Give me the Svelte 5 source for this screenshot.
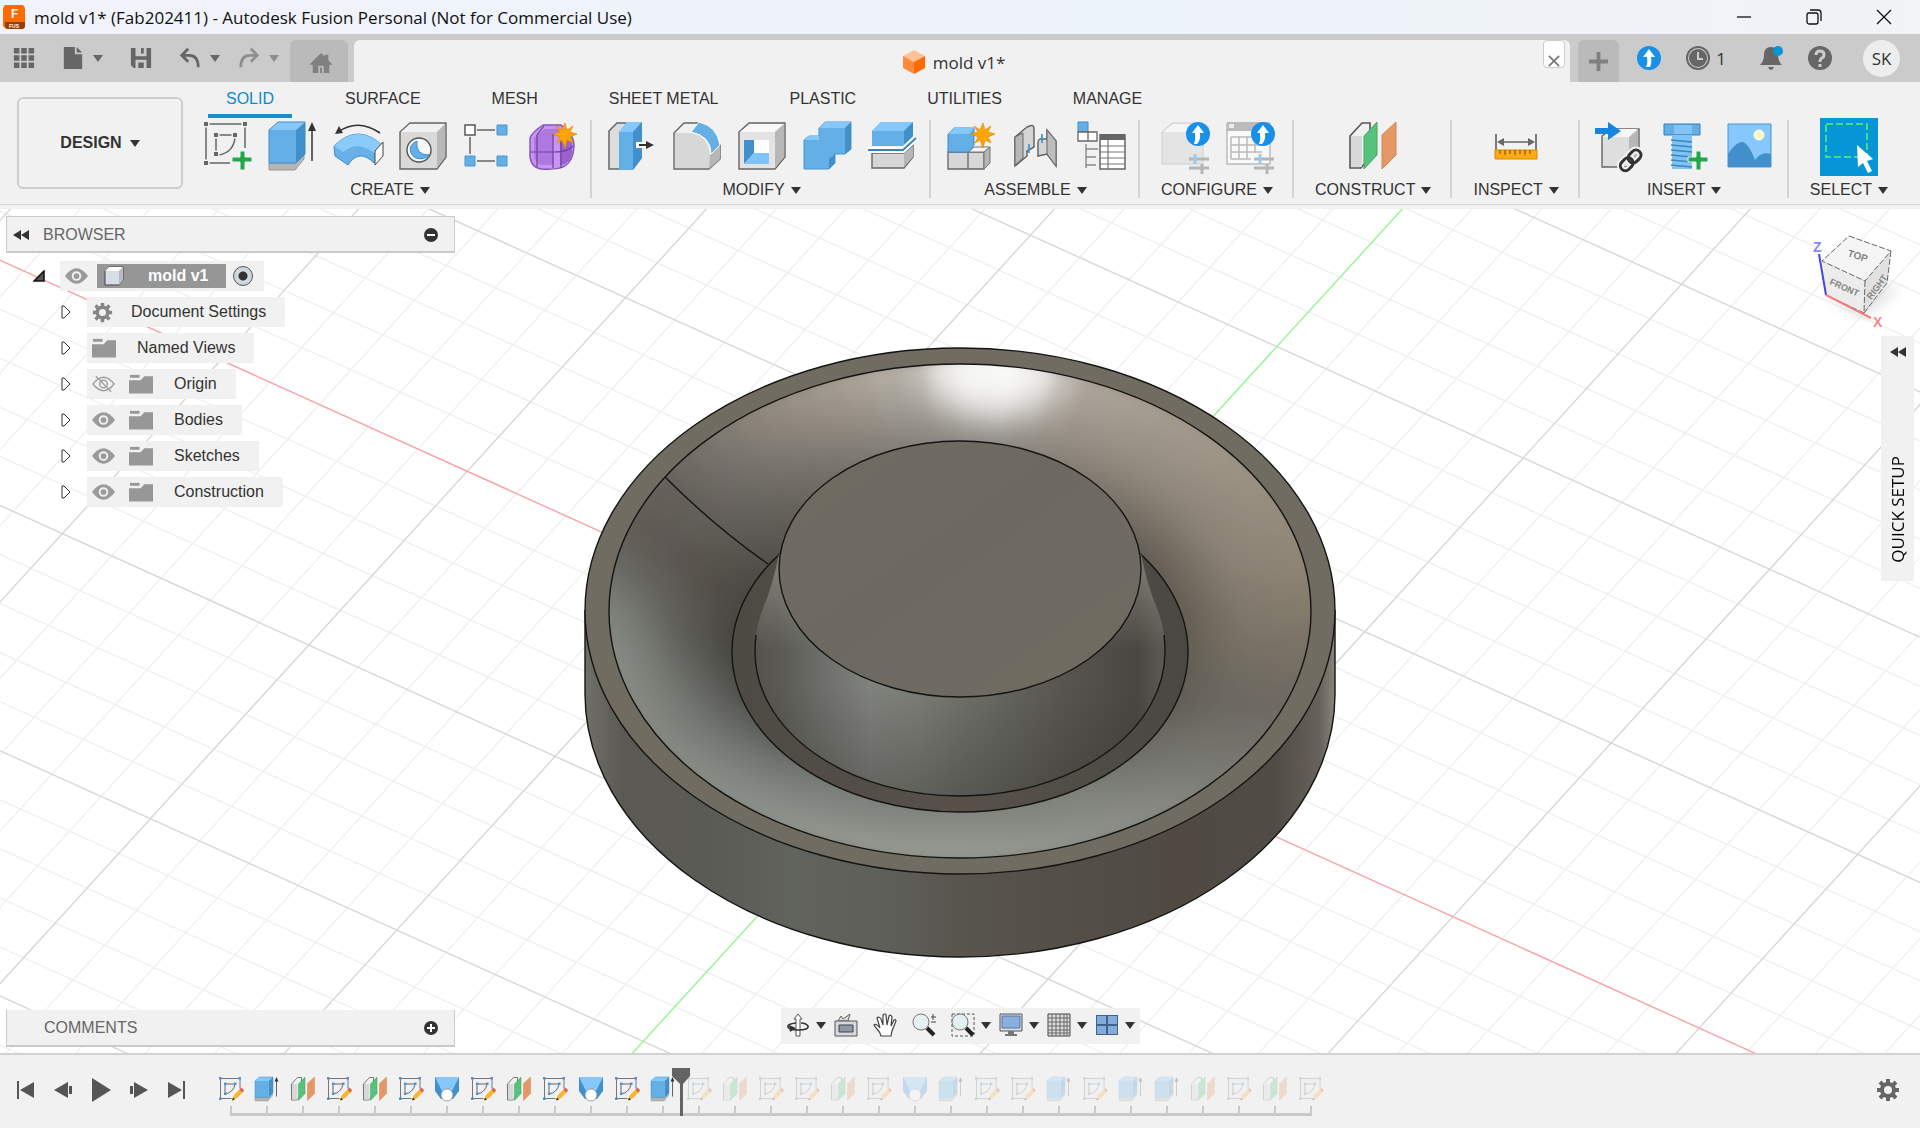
<script>
    const tabs = ["SOLID", "SURFACE", "MESH", "SHEET METAL", "PLASTIC", "UTILITIES", "MANAGE"];
    const groups = [
        { label: "CREATE", icons: ["sketch", "extrude", "revolve", "hole", "pattern", "form"] },
        { label: "MODIFY", icons: ["presspull", "fillet", "shell", "combine", "split"] },
        { label: "ASSEMBLE", icons: ["component", "joint", "structure"] },
        { label: "CONFIGURE", icons: ["configure", "configtable"] },
        { label: "CONSTRUCT", icons: ["plane"] },
        { label: "INSPECT", icons: ["measure"] },
        { label: "INSERT", icons: ["insert", "fastener", "image"] },
        { label: "SELECT", icons: ["select"] },
    ];
    const tree = [
        { name: "Document Settings", gear: true },
        { name: "Named Views" },
        { name: "Origin", eye: "off" },
        { name: "Bodies", eye: "on" },
        { name: "Sketches", eye: "on" },
        { name: "Construction", eye: "on" },
    ];
    const nav = [
        { name: "orbit", drop: true },
        { name: "lookat" },
        { name: "pan" },
        { name: "zoom" },
        { name: "fit", drop: true },
        { name: "display", drop: true },
        { name: "grid", drop: true },
        { name: "viewports", drop: true },
    ];
    const kinds = { S: "tsketch", E: "extrude", P: "plane", L: "loft" };
    const features = "SEPSPSLSPSLSESPSSPSLESSESEEPSPS".split("").map((k) => kinds[k]);
    const rolled = 13;
    const playback = ["first", "back", "play", "forward", "last"];

    let activeTab = $state("SOLID");

    // ground plane grid: one major cell is u along X and v along Y
    const ox = 960, oy = 485;
    const u = [49.28, 22.27], v = [31.68, -34.74];
    const lines = [];
    for (let i = -34; i <= 34; i++) {
        for (const [a, b, axis] of [[u, v, "y"], [v, u, "x"]]) {
            const x = ox + a[0] * i, y = oy + a[1] * i;
            lines.push({
                x1: x - b[0] * 40, y1: y - b[1] * 40,
                x2: x + b[0] * 40, y2: y + b[1] * 40,
                kind: i === 0 ? axis : i % 5 === 0 ? "major" : "minor",
            });
        }
    }
    const rank = { minor: 0, major: 1, x: 2, y: 2 };
    lines.sort((a, b) => rank[a.kind] - rank[b.kind]);

    // groove shading, colours by angle at the rim, halfway down and at the floor
    const rimStops = [[0, "807868"], [10, "777066"], [20, "6d6861"], [35, "76756f"], [50, "868881"], [70, "92958e"], [90, "999d96"], [110, "959992"], [130, "8c908a"], [150, "868a83"], [170, "888d86"], [180, "80857e"], [190, "6b6c66"], [200, "605b54"], [212, "66625c"], [225, "7d7870"], [235, "928b80"], [250, "a8a196"], [262, "beb9b0"], [270, "e2e0dc"], [276, "f4f3f2"], [283, "d0ccc6"], [290, "b0a89e"], [305, "a69d91"], [320, "9f9688"], [335, "978d7f"], [350, "8e8475"], [360, "807868"]];
    const midStops = [[0, "7a7367"], [20, "6b6760"], [40, "777771"], [60, "858881"], [90, "8b8f88"], [120, "848882"], [150, "727570"], [165, "6c6e69"], [180, "62615c"], [200, "58544e"], [215, "64615c"], [235, "77736c"], [250, "857f77"], [275, "99958f"], [290, "908a80"], [320, "8d8578"], [340, "8a8174"], [360, "7a7367"]];
    const floorStops = [[0, "5e594f"], [20, "5f5b54"], [40, "6c6c66"], [60, "7a7d77"], [90, "7d817b"], [120, "757974"], [140, "60625e"], [160, "4a4a46"], [180, "403e39"], [195, "46433e"], [215, "504d48"], [235, "5c5953"], [275, "625f59"], [300, "5e5951"], [320, "58534b"], [340, "5a544b"], [360, "5e594f"]];
    const rgb = (hex) => [0, 2, 4].map((i) => parseInt(hex.slice(i, i + 2), 16));
    const mix = (a, b, t) => a.map((c, i) => c + (b[i] - c) * t);
    function colourAt(stops, deg) {
        const n = stops.findIndex((s) => s[0] > deg);
        const [d0, c0] = stops[n - 1], [d1, c1] = stops[n];
        return mix(rgb(c0), rgb(c1), (deg - d0) / (d1 - d0));
    }
    function point(deg, t) {
        const r = deg * Math.PI / 180;
        return [960 + Math.cos(r) * (360 - 150 * t), 402 + 42 * t + Math.sin(r) * (253 - 106 * t)].map(Math.round).join(" ");
    }
    const facets = [];
    for (let t = 0; t < 12; t++) {
        for (let d = 0; d < 360; d += 5) {
            const k = (t + 0.5) / 12;
            const top = colourAt(rimStops, d + 2), mid = colourAt(midStops, d + 2), low = colourAt(floorStops, d + 2);
            const c = k < 0.5 ? mix(top, mid, (k * 2) ** 1.4) : mix(mid, low, k * 2 - 1);
            facets.push({
                d: `M${point(d, t / 12)}L${point(d + 6, t / 12)}L${point(d + 6, (t + 1.3) / 12)}L${point(d, (t + 1.3) / 12)}Z`,
                fill: `rgb(${c.map(Math.round).join(",")})`,
            });
        }
    }
</script>

{#snippet plus()}
    <path d="M36 29h5v6h7v5h-7v8h-5v-8h-8v-5h8z" fill="#22a84b" stroke="#f1f1f1" stroke-width="1" />
{/snippet}

{#snippet star()}
    <path d="m36 1 2 7 6-4-3 6 7 2-7 3 3 6-6-3-2 8-3-8-5 3 3-6-7-3 7-2-4-6 6 4z" fill="#ffa400" stroke="#e08c00" stroke-width=".7" />
{/snippet}

{#snippet badge()}
    <circle cx="37" cy="12" r="12" fill="#188fe8" />
    <path d="M37 3l6 8h-4q1 7-3 11h-3q2-5 1-11h-3z" fill="#fff" />
    <path d="M28 37h20M28 46h20M41 42v10" stroke="#b5b5b5" stroke-width="3" />
    <path d="M34 32v10" stroke="#9cc9ec" stroke-width="3" />
{/snippet}

{#snippet icon(name, cls)}
    <svg class={cls} viewBox="0 0 48 48" aria-hidden="true">
        {#if name === "sketch"}
            <path d="M2 2h39v24M2 2v39h24" fill="none" stroke="#666" stroke-width="1.5" />
            <path d="M12 13h20M12 13v20h3q15-3 16-18" fill="none" stroke="#666" stroke-width="1.5" />
            <path d="M0 0h4v4H0zM39 0h4v4h-4zM0 39h4v4H0zM10 11h4v4h-4zM29 11h4v4h-4zM10 30h4v4h-4z" fill="#666" stroke="#f1f1f1" stroke-width="3" paint-order="stroke" />
            {@render plus()}
        {:else if name === "tsketch"}
            <path d="M2 3h40v20M3 3v40h22" fill="none" stroke="#777" stroke-width="2" />
            <path d="M12 14h20M12 14v20q17-3 20-20" fill="none" stroke="#666" stroke-width="2" />
            <path d="M0 0h5v5H0zM39 0h5v5h-5zM0 41h5v5H0zM10 11h5v5h-5zM30 11h5v5h-5zM10 31h5v5h-5z" fill="#4795dc" />
            <path d="m26 47 4-11 12-12 6 6-12 12z" fill="#f8b62d" />
            <path d="m41 25 4-4 5 6-3 4z" fill="#e05a4b" /><path d="m26 47 2-6 4 4z" fill="#333" />
        {:else if name === "extrude"}
            <path d="M0 41h27l8-10v6l-9 11H0z" fill="#b5b5b5" stroke="#999" />
            <path d="m0 8 9-8h27l-9 8z" fill="#86c8fb" /><path d="M0 8h27v33H0z" fill="#64afe6" />
            <path d="m27 8 9-8v32l-9 9z" fill="#4190cb" /><path d="m0 8 9-8h27v32l-9 9H0z" fill="none" stroke="#3c8cc7" />
            <path d="M43 39V5" stroke="#333" stroke-width="1.5" /><path d="m43 0 4 9h-8z" fill="#333" />
        {:else if name === "revolve"}
            <path d="M0 24q24-24 49 0l-9 17q-15-15-26 2L1 34z" fill="#67b1e8" stroke="#3d8dc8" />
            <path d="M0 24q24-24 49 0l-9 7q-16-13-31-1z" fill="#8acbfa" />
            <path d="m49 20-8 9v14l8-9z" fill="#fff" stroke="#444" />
            <path d="M4 10Q24-4 46 11" fill="none" stroke="#333" stroke-width="1.7" /><path d="m1 12 4-8 4 7z" fill="#333" />
        {:else if name === "hole"}
            <path d="M1 10 11 1h36v34l-9 12H1z" fill="#d9d9d9" stroke="#666" stroke-width="1.4" />
            <path d="M2 10 11 2h35l-8 8z" fill="#f1f1f1" /><path d="m38 10 8-8v33l-8 11z" fill="#b8b8b8" />
            <circle cx="20" cy="28" r="12" fill="#f8f8f8" stroke="#555" stroke-width="1.4" />
            <path d="M18 19q-9 4-6 12 4 8 14 5 2-1 4-3-14 0-12-14z" fill="#64afe6" stroke="#3c8cc7" />
        {:else if name === "pattern"}
            <path d="M13 8h18M6 15v17M13 39h18" stroke="#666" stroke-width="1.5" />
            <path d="M1 3h10v10H1z" fill="#fff" stroke="#555" stroke-width="1.5" />
            <path d="M33 3h10v10H33zM1 34h10v10H1zM33 34h10v10H33z" fill="#64afe6" stroke="#4a95d0" />
        {:else if name === "form"}
            <path d="M1 16Q3 10 14 3h18q14 10 13 22-1 14-9 19-6 4-24 3Q0 45 1 30z" fill="#c794f1" stroke="#8455b8" stroke-width="1.4" />
            <path d="m5 16 11-9h16l-8 8v28H12q-7-2-7-12z" fill="#ad79df" /><path d="M31 16q8 3 12 2v13q-2 10-10 12h-2z" fill="#9b61cf" />
            <path d="M15 4 8 13v32M24 12v34M1 30h24q14 0 19-6M32 20v26" fill="none" stroke="#6f419e" stroke-width="1.2" />
            {@render star()}
        {:else if name === "presspull"}
            <path d="M1 9 9 1h9v46H1z" fill="#ddd" stroke="#666" stroke-width="1.5" />
            <path d="m11 10 8-10h15v36L25 48H11z" fill="#64afe6" /><path d="m11 10 8-10h15l-9 10z" fill="#86c8fb" /><path d="m25 10 9-10v36l-9 12z" fill="#4190cb" />
            <path d="M28 23h17" stroke="#fff" stroke-width="6" /><path d="M31 23h9" stroke="#333" stroke-width="2" /><path d="m38 19 8 4-8 4z" fill="#333" />
        {:else if name === "fillet"}
            <path d="M1 11 11 1h15l21 22v14L36 47H1z" fill="#f1f1f1" stroke="#666" stroke-width="1.4" />
            <path d="M2 11h16q18 3 19 23v12H2z" fill="#d7d7d7" /><path d="m37 33 10-9v13L36 47z" fill="#b6b6b6" />
            <path d="M18 10 26 0q18 4 21 23l-9 9Q38 14 18 10z" fill="#64afe6" stroke="#fff" />
        {:else if name === "shell"}
            <path d="M1 10 11 1h36v34L37 47H1z" fill="#e3e3e3" stroke="#666" stroke-width="1.4" />
            <path d="m2 10 10-8h34l-9 8z" fill="#f8f8f8" /><path d="m37 10 9-8v33l-9 11z" fill="#b8b8b8" />
            <path d="M6 18h25v24H6z" fill="#fff" /><path d="M6 18h10v13L6 42z" fill="#4190cb" /><path d="m6 42 10-11h15v11z" fill="#7fc3f8" />
        {:else if name === "combine"}
            <path d="m1 18 5-4h10V6l6-6h26v27l-6 5H32v9l-6 6H1z" fill="#64afe6" stroke="#4a95d0" />
            <path d="m16 6 6-6h26l-6 6z" fill="#86c8fb" /><path d="m42 6 6-6v27l-6 5z" fill="#4190cb" /><path d="m1 18 5-4h10v4z" fill="#86c8fb" /><path d="m32 32-6 5v10l6-6z" fill="#4190cb" />
        {:else if name === "split"}
            <path d="M4 31h32l9-8v12L36 46H4z" fill="#d6d6d6" stroke="#666" stroke-width="1.4" /><path d="m36 32 9-8v11l-9 10z" fill="#b6b6b6" />
            <path d="m4 9 9-9h32v14l-9 10H4z" fill="#64afe6" /><path d="m4 9 9-9h32l-9 9z" fill="#86c8fb" /><path d="m36 9 9-9v14l-9 10z" fill="#4190cb" />
            <path d="M0 28h35l13-12" fill="none" stroke="#fff" stroke-width="6" /><path d="M0 28h35l13-12" fill="none" stroke="#3484c2" stroke-width="1.8" />
        {:else if name === "component"}
            <path d="M1 30h20v17H1zM21 30h16v17H21z" fill="#d7d7d7" stroke="#666" stroke-width="1.3" />
            <path d="m21 30 6-5h16l-6 5z" fill="#f4f4f4" stroke="#777" /><path d="m37 30 6-5v16l-6 6z" fill="#b5b5b5" stroke="#777" />
            <path d="m1 12 6-6h20v17l-5 7H1z" fill="#64afe6" stroke="#3c8cc7" /><path d="m1 12 6-6h20l-5 6z" fill="#86c8fb" />
            {@render star()}
        {:else if name === "joint"}
            <path d="m3 15 12-10q7-4 7 2v18l-7 4v5L3 44z" fill="#d6d6d6" stroke="#666" stroke-width="1.5" />
            <path d="M3 15v28l8-7V11z" fill="#b7b7b7" stroke="#666" />
            <path d="M26 21q0-5 5-4h4V8l9 11v25l-9-12-9 2z" fill="#d6d6d6" stroke="#666" stroke-width="1.5" /><path d="m35 8 9 11v25l-9-12z" fill="#bdbdbd" stroke="#666" />
            <path d="M17 22v9M30 12v9" stroke="#3b94dd" stroke-width="1.7" />
        {:else if name === "structure"}
            <path d="M1 0h10v10H1z" fill="#64afe6" stroke="#3c8cc7" /><path d="M1 10h10v9H1zM11 10h9v9h-9z" fill="#fff" stroke="#666" stroke-width="1.3" />
            <path d="M9 22v24M9 27h12M9 35h10M9 43h10" stroke="#888" stroke-width="1.4" />
            <path d="M23 13h25v34H23z" fill="#fff" stroke="#666" stroke-width="1.5" /><path d="M23 12h25v6H23z" fill="#666" />
            <path d="M23 24h25M23 30h25M23 36h25M23 42h25M31 18v29" stroke="#777" stroke-width="1.2" />
        {:else if name === "configure"}
            <path d="M1 10 11 1h31v41H1z" fill="#e4e4e4" stroke="#cecece" /><path d="m2 10 10-8h29l-9 8z" fill="#f6f6f6" />
            {@render badge()}
        {:else if name === "configtable"}
            <path d="M1 2h43v40H1z" fill="#f9f9f9" stroke="#bbb" stroke-width="1.5" /><path d="M1 0h43v9H1z" fill="#bbb" /><path d="M3 2h5v4H3z" fill="#eee" />
            <path d="M5 15h31M5 23h31M5 30h31M5 37h20M5 15v22M13 15v22M21 15v22M29 15v16" stroke="#bbb" stroke-width="1.5" />
            {@render badge()}
        {:else if name === "plane"}
            <path d="m1 14 12-13h8v34L12 46H1z" fill="#f1f1f1" stroke="#555" stroke-width="1.6" /><path d="M2 14h11v31H2z" fill="#d8d8d8" />
            <path d="M15 14 28 0v33L15 47z" fill="#56c27b" stroke="#3ea965" /><path d="M33 13 47 0v33L33 47z" fill="#e59866" stroke="#d28551" />
        {:else if name === "measure"}
            <path d="M4 12v16M44 12v16M8 20h32" stroke="#666" stroke-width="1.7" /><path d="m5 20 7-4v8zM43 20l-7-4v8z" fill="#666" />
            <path d="M3 28h42v9H3z" fill="#ffa916" stroke="#d98a00" /><path d="M8 28v4M13 28v5M18 28v4M23 28v5M28 28v4M33 28v5M38 28v4" stroke="#6b4a10" />
        {:else if name === "insert"}
            <path d="m7 14 10-7h27v27L34 45H7z" fill="#dedede" stroke="#666" stroke-width="1.4" /><path d="m34 15 9-8v27l-9 10z" fill="#b7b7b7" /><path d="m8 15 9-8h26l-9 8z" fill="#f6f6f6" />
            <path d="M0 6h13V0l13 9-13 9v-6H0z" fill="#1585e0" />
            <g fill="none" transform="rotate(-45 36 38)"><rect x="23" y="33" width="14" height="10" rx="5" stroke="#f1f1f1" stroke-width="7" /><rect x="34" y="33" width="14" height="10" rx="5" stroke="#f1f1f1" stroke-width="7" /><rect x="23" y="33" width="14" height="10" rx="5" stroke="#333" stroke-width="3" /><rect x="34" y="33" width="14" height="10" rx="5" stroke="#333" stroke-width="3" /></g>
        {:else if name === "fastener"}
            <path d="M4 2h36v11H4z" fill="#62aee5" stroke="#3481b8" /><path d="M14 3h18v9H14z" fill="#83c4f4" />
            <path d="M12 13h20v34H12z" fill="#7fc2f5" /><path d="M11 18l21 2M11 23l21 2M11 28l21 2M11 33l21 2M11 38l21 2M11 43l21 2" stroke="#3c86bd" stroke-width="1.6" />
            {@render plus()}
        {:else if name === "image"}
            <path d="M3 2h43v43H3z" fill="#86c8fb" stroke="#4a95d0" /><circle cx="34" cy="13" r="5" fill="#fdf7c0" stroke="#fff" />
            <path d="M3 32q8-12 14-12t13 18q6-9 16-6v13H3z" fill="#4190cb" />
        {:else if name === "select"}
            <path d="M1 1h41v33H1z" fill="none" stroke="#43dd8a" stroke-width="2" stroke-dasharray="7 3" />
            <path d="m32 22 1 22 5-4 5 10 4-2-5-10 6-2z" fill="#fff" />
        {:else if name === "loft"}
            <path d="M0 0h48v28L36 44H12L0 28z" fill="#4190cb" /><path d="m0 0 14 28h20L48 0z" fill="#86c8fb" /><circle cx="24" cy="36" r="12" fill="#fff" stroke="#888" stroke-width="1.5" />
        {/if}
    </svg>
{/snippet}

{#snippet eye(state)}
    <svg class="eye" viewBox="0 0 24 16" aria-hidden="true">
        {#if state === "off"}
            <path d="M1 8q11-14 22 0-11 14-22 0z" fill="none" stroke="#a0a0a0" stroke-width="1.5" />
            <circle cx="12" cy="8" r="4" fill="none" stroke="#a0a0a0" stroke-width="1.5" /><path d="m4 0 16 16" stroke="#a0a0a0" stroke-width="1.5" />
        {:else}
            <path d="M0 8q12-16 24 0-12 16-24 0z" fill="#9a9a9a" /><circle cx="12" cy="8" r="4" fill="none" stroke="#f1f1f1" stroke-width="2" />
        {/if}
    </svg>
{/snippet}

{#snippet gear(cls)}
    <svg class={cls} viewBox="-12 -12 24 24" aria-hidden="true">
        <circle r="6" fill="none" stroke="currentColor" stroke-width="4" />
        <path d="M0-7v-4M0 7v4M7 0h4M-7 0h-4M5-5l3-3M-5 5l-3 3M5 5l3 3M-5-5l-3-3" stroke="currentColor" stroke-width="4" />
    </svg>
{/snippet}

<main>
    <header class="titlebar">
        <svg class="logo" viewBox="0 0 22 24" aria-hidden="true">
            <path d="M2 0h18l2 3v19l-2 2H3l-3-3V3z" fill="#ff6b00" /><path d="M2 17h20v5l-2 2H4l-2-2z" fill="#993d00" />
            <text x="8" y="13" font-size="12" font-weight="700" fill="#fff">F</text><text x="6" y="23" font-size="5" font-weight="700" fill="#fff">FUS</text>
        </svg>
        <h1>mold v1* (Fab202411) - Autodesk Fusion Personal (Not for Commercial Use)</h1>
        <div class="window">
            <button aria-label="Minimize"><svg viewBox="0 0 16 16"><path d="M1 8h14" /></svg></button>
            <button aria-label="Restore"><svg viewBox="0 0 16 16"><rect x="1" y="4" width="11" height="11" rx="2" /><path d="M4 1h8q3 0 3 3v8" /></svg></button>
            <button aria-label="Close"><svg viewBox="0 0 16 16"><path d="m1 1 14 14M15 1 1 15" /></svg></button>
        </div>
    </header>

    <div class="appbar">
        <div class="quick">
            <button aria-label="Data panel"><svg viewBox="0 0 24 24"><path d="M1 1h6v6H1zM9 1h6v6H9zM17 1h6v6h-6zM1 9h6v6H1zM9 9h6v6H9zM17 9h6v6h-6zM1 17h6v6H1zM9 17h6v6H9zM17 17h6v6h-6z" /></svg></button>
            <button class="wide" aria-label="File"><svg viewBox="0 0 24 24"><path d="M2 0h12v8h8v16H2zM16 0l6 6h-6z" /></svg><i class="caret"></i></button>
            <button aria-label="Save"><svg viewBox="0 0 24 24"><path d="M1 1h22v22H4l-3-3zM6 1v9h12V1h-3v6h-3V1zM6 14v9h3v-6h6v6h3v-9z" fill-rule="evenodd" /></svg></button>
            <button class="wide" aria-label="Undo"><svg viewBox="0 0 24 24"><path d="m10 2-7 7 7 7M4 9h7q10 0 10 13" class="line" /></svg><i class="caret"></i></button>
            <button class="wide faded" aria-label="Redo"><svg viewBox="0 0 24 24"><path d="m14 2 7 7-7 7M20 9h-7Q3 9 3 22" class="line" /></svg><i class="caret"></i></button>
        </div>
        <button class="home" aria-label="Home"><svg viewBox="0 0 24 24"><path d="M12 1l4 4V3h4v6l4 4v1h-3v9h-6v-8H9v8H3v-9H0v-1z" /><path d="M11 17h2v6h-2z" /></svg></button>
        <div class="doctab">
            <div class="docname">
                <svg viewBox="0 0 24 24"><path d="m12 0 11 6-11 6L1 6z" fill="#ffc196" /><path d="M1 6l11 6v12L1 18z" fill="#ff8a3c" /><path d="m23 6-11 6v12l11-6z" fill="#ff6b00" /></svg>
                mold v1*
            </div>
            <button class="closetab" aria-label="Close tab"><svg viewBox="0 0 14 14"><path d="m1 1 12 12M13 1 1 13" /></svg></button>
        </div>
        <button class="newtab" aria-label="New tab"><svg viewBox="0 0 20 20"><path d="M8 0h4v8h8v4h-8v8H8v-8H0V8h8z" /></svg></button>
        <div class="account">
            <button aria-label="Extensions"><svg viewBox="0 0 24 24"><circle cx="12" cy="12" r="12" fill="#188fe8" /><path d="m12 3 6 8h-4q1 6-1 10h-4q2-4 1-10H6z" fill="#fff" /></svg></button>
            <button class="jobs" aria-label="Job status"><svg viewBox="0 0 24 24"><circle cx="12" cy="12" r="11" fill="none" stroke="#666" stroke-width="2" /><circle cx="12" cy="12" r="9" /><path d="M12 6v7h5" fill="none" stroke="#ccc" stroke-width="2" /></svg>1</button>
            <button aria-label="Notifications"><svg viewBox="0 0 24 24"><path d="M12 1q-7 0-7 8 0 6-4 10h22q-4-4-4-10 0-8-7-8zM9 21h6q-1 3-3 3t-3-3z" /><circle cx="19" cy="5" r="5" fill="#0696d7" /></svg></button>
            <button aria-label="Help"><svg viewBox="0 0 24 24"><circle cx="12" cy="12" r="12" /><path d="M8 9q0-4 4-4t4 4q0 2-2 3t-2 4M12 18v3" fill="none" stroke="#ccc" stroke-width="3" /></svg></button>
            <button class="avatar">SK</button>
        </div>
    </div>

    <div class="ribbon">
        <button class="design">DESIGN <i class="caret"></i></button>
        <div class="tools">
            <nav>
                {#each tabs as tab}
                    <button class:active={tab === activeTab} onclick={() => (activeTab = tab)}>{tab}</button>
                {/each}
            </nav>
            <div class="groups">
                {#each groups as group}
                    <div class="group">
                        <div class="icons">
                            {#each group.icons as name}
                                <button class="tool" class:picked={name === "select"} aria-label={name}>{@render icon(name, "big")}</button>
                            {/each}
                        </div>
                        <button class="label">{group.label} <i class="caret"></i></button>
                    </div>
                {/each}
            </div>
        </div>
    </div>

    <section class="stage">
        <svg class="scene" viewBox="0 0 1920 844" preserveAspectRatio="xMidYMid slice" aria-label="Model view">
            <defs>
                <clipPath id="rim"><ellipse cx="960" cy="402" rx="351" ry="247" /></clipPath>
                <clipPath id="boss"><path d="M779 345Q773 376 762 402 755 420 755 443A205 144 0 0 0 1165 443Q1165 420 1158 402 1147 376 1141 345Z" /></clipPath>
                <filter id="soft" x="-10%" y="-10%" width="120%" height="120%"><feGaussianBlur stdDeviation="7" /></filter>
                <filter id="glow" x="-50%" y="-80%" width="200%" height="260%"><feGaussianBlur stdDeviation="16" /></filter>
                <linearGradient id="wall">
                    <stop offset="0" stop-color="#716f69" /><stop offset=".05" stop-color="#5b5954" /><stop offset=".17" stop-color="#5b5b56" /><stop offset=".28" stop-color="#61635d" /><stop offset=".4" stop-color="#5f5f59" />
                    <stop offset=".52" stop-color="#57534d" /><stop offset=".8" stop-color="#4f4942" /><stop offset=".92" stop-color="#504c45" /><stop offset=".98" stop-color="#67635b" /><stop offset="1" stop-color="#8a857a" />
                </linearGradient>
                <linearGradient id="side">
                    <stop offset="0" stop-color="#55534e" /><stop offset=".06" stop-color="#5a5954" /><stop offset=".15" stop-color="#6b6c67" /><stop offset=".28" stop-color="#80827d" /><stop offset=".4" stop-color="#7b7d77" />
                    <stop offset=".5" stop-color="#70716b" /><stop offset=".62" stop-color="#64645e" /><stop offset=".75" stop-color="#575550" /><stop offset=".93" stop-color="#4a4742" /><stop offset="1" stop-color="#5d5a54" />
                </linearGradient>
                <linearGradient id="shade" x2="0" y2="1"><stop offset=".55" stop-color="#34322e" stop-opacity="0" /><stop offset="1" stop-color="#34322e" stop-opacity=".4" /></linearGradient>
                <linearGradient id="sheen" x2="0" y2="1"><stop offset="0" stop-color="#a9a59a" stop-opacity=".6" /><stop offset=".4" stop-color="#a9a59a" stop-opacity="0" /></linearGradient>
                <linearGradient id="floor"><stop offset="0" stop-color="#4d4a44" /><stop offset=".5" stop-color="#57514a" /><stop offset="1" stop-color="#4a4843" /></linearGradient>
                <linearGradient id="cap" x2="1" y2="1"><stop offset="0" stop-color="#706c61" /><stop offset=".45" stop-color="#6d6962" /><stop offset="1" stop-color="#706c61" /></linearGradient>
            </defs>
            {#each lines as l}
                <line class={l.kind} x1={l.x1} y1={l.y1} x2={l.x2} y2={l.y2} />
            {/each}
            <path class="edge" d="M585 402v83a375 263 0 0 0 750 0v-83z" fill="url(#wall)" />
            <ellipse class="edge" cx="960" cy="402" rx="375" ry="263" fill="#706c62" />
            <g clip-path="url(#rim)">
                <g filter="url(#soft)">
                    {#each facets as f}
                        <path d={f.d} fill={f.fill} />
                    {/each}
                </g>
                <ellipse cx="994" cy="164" rx="62" ry="40" fill="#fff" opacity=".75" filter="url(#glow)" />
            </g>
            <ellipse class="edge" cx="960" cy="402" rx="351" ry="247" fill="none" />
            <path class="edge" d="M665 268q50 50 103 87" fill="none" />
            <ellipse class="edge" cx="960" cy="443" rx="228" ry="160" fill="url(#floor)" />
            <g clip-path="url(#boss)">
                <rect x="755" y="340" width="410" height="250" fill="url(#side)" />
                <rect x="750" y="340" width="420" height="250" fill="url(#shade)" />
                <rect x="750" y="340" width="420" height="250" fill="url(#sheen)" />
            </g>
            <path class="edge" d="M756 426Q755 434 755 443A205 144 0 0 0 1165 443Q1165 434 1164 426" fill="none" />
            <ellipse class="edge" cx="960" cy="360" rx="181" ry="128" fill="url(#cap)" />
        </svg>

        <div class="left">
            <aside class="browser">
                <div class="panel">
                    <svg class="collapse" viewBox="0 0 16 10"><path d="M8 0v10L0 5zM16 0v10L8 5z" /></svg>
                    <h2>BROWSER</h2>
                    <svg class="dot" viewBox="0 0 14 14"><circle cx="7" cy="7" r="7" /><path d="M3 7h8" stroke="#fff" stroke-width="2" /></svg>
                </div>
                <ul>
                    <li class="root">
                        <svg class="open" viewBox="0 0 12 12"><path d="M11 1v10H1z" fill="#555" stroke="#111" stroke-width="1.5" /></svg>
                        <div class="item">
                            {@render eye("on")}
                            <span class="selected">
                                <svg viewBox="0 0 20 20"><path d="m1 5 4-4h14v13l-4 5H1z" fill="#d8dce4" stroke="#444" /><path d="m1 5 4-4h14l-4 4z" fill="#fff" /><path d="m15 5 4-4v13l-4 5z" fill="#b5bac6" /></svg>
                                mold v1
                            </span>
                            <input type="radio" name="activate" checked aria-label="Activate mold v1" />
                        </div>
                    </li>
                    {#each tree as row}
                        <li>
                            <svg class="closed" viewBox="0 0 10 14"><path d="M1 1h2l6 6-6 6H1z" fill="#fff" stroke="#333" /></svg>
                            <div class="item">
                                {#if row.gear}{@render gear("cog")}{/if}
                                {#if row.eye}{@render eye(row.eye)}{/if}
                                {#if !row.gear}
                                    <svg class="folder" class:second={row.eye} viewBox="0 0 25 20"><path d="M0 6h12l4-4h9v18H0z" fill="#979797" /><path d="M1 2h10" stroke="#979797" stroke-width="3" /></svg>
                                {/if}
                                <span>{row.name}</span>
                            </div>
                        </li>
                    {/each}
                </ul>
            </aside>
            <div class="panel comments">
                <h2>COMMENTS</h2>
                <svg class="dot" viewBox="0 0 14 14"><circle cx="7" cy="7" r="7" /><path d="M3 7h8M7 3v8" stroke="#fff" stroke-width="2" /></svg>
            </div>
        </div>

        <div class="navbar">
            {#each nav as item}
                <button class:drop={item.drop} aria-label={item.name}>
                    <svg viewBox="0 0 24 24">
                        {#if item.name === "orbit"}
                            <path d="M10 23V6H8l4-5 4 5h-2v17z" fill="#fff" stroke="#555" /><path d="M10 10Q1 11 2 14t10 3q11 0 10-4-2-3-7-3" fill="none" stroke="#333" stroke-width="1.6" /><path d="m3 12 7 3-6 4z" fill="#333" />
                        {:else if item.name === "lookat"}
                            <path d="m4 8 3-5 2 3 7-5-2 7z" fill="#ddd" stroke="#666" /><path d="M1 8h22v15H1z" fill="#d6d9de" stroke="#555" /><path d="M5 12h14v7H5z" fill="#8e98a6" stroke="#444" />
                        {:else if item.name === "pan"}
                            <path d="M8 23q-1-4-4-7l-3-4q2-2 6 3L4 5q2-2 4 1l2 6V2q2-2 3 0l1 10 2-9q2-2 3 1l-1 9 3-6q2-1 2 1l-4 10-1 5z" fill="#fff" stroke="#444" stroke-width="1.2" />
                        {:else if item.name === "zoom" || item.name === "fit"}
                            {#if item.name === "fit"}<path d="M1 1h22v22H1z" fill="none" stroke="#555" stroke-dasharray="3 2" />{:else}<path d="M19 4h5M21 1v6M19 9h5" stroke="#444" />{/if}
                            <path d="m15 15 7 7" stroke="#222" stroke-width="4" /><circle cx="9" cy="9" r="8" fill="#e4f0f2" stroke="#777" />
                        {:else if item.name === "display"}
                            <path d="M1 1h22v17H1z" fill="#ddd" stroke="#555" /><path d="M3 3h18v12H3z" fill="#87afe0" stroke="#5676a4" /><path d="M9 18h6v3h3v2H6v-2h3z" fill="#777" />
                        {:else if item.name === "grid"}
                            <path d="M1 1h22v22H1z" fill="#ddd" stroke="#444" /><path d="M1 5h22M1 9h22M1 13h22M1 17h22M1 20h22M5 1v22M9 1v22M13 1v22M17 1v22M20 1v22" stroke="#666" />
                        {:else}
                            <path d="M1 2h22v20H1z" fill="#3f6390" /><path d="M2 3h9v8H2zM13 3h9v8h-9zM2 13h9v8H2zM13 13h9v8h-9z" fill="#85abd8" />
                        {/if}
                    </svg>
                    {#if item.drop}<i class="caret"></i>{/if}
                </button>
            {/each}
        </div>

        <div class="right">
            <svg class="cube" viewBox="0 0 92 104" aria-label="View cube">
                <path d="m22 66 36 22 34-28-10-6z" fill="#bbb" opacity=".4" filter="url(#soft)" />
                <path d="m43 6 42 15-26 30L16 31z" fill="#f5f5f5" /><path d="m16 31 43 20-1 32-38-18z" fill="#ececec" /><path d="m59 51 26-30-4 32-23 30z" fill="#e1e1e1" />
                <path d="m43 6 42 15-26 30L16 31zM59 51l-1 32 23-30 4-32M58 83 20 65" fill="none" stroke="#666" stroke-dasharray="6 2" />
                <path d="m13 24 7 41" stroke="#4a43e0" stroke-width="2" /><path d="m20 65 45 23" stroke="#f08080" stroke-width="2" />
                <text x="7" y="22" class="z">Z</text><text x="67" y="97" class="xlabel">X</text>
                <text x="41" y="26" transform="rotate(18 41 26)">TOP</text>
                <text x="23" y="54" class="small" transform="rotate(24 23 54)">FRONT</text>
                <text x="65" y="70" class="small" transform="rotate(-53 65 70)">RIGHT</text>
            </svg>
            <button class="setup">
                <svg class="collapse" viewBox="0 0 16 10"><path d="M8 0v10L0 5zM16 0v10L8 5z" /></svg>
                <span>QUICK SETUP</span>
            </button>
        </div>
    </section>

    <footer>
        <div class="playback">
            {#each playback as name}
                <button aria-label={name}>
                    <svg viewBox="0 0 20 20">
                        {#if name === "first"}<path d="M2 1h2v18H2zM19 2v16L5 10z" />
                        {:else if name === "back"}<path d="M15 2v16L1 10zM16 6h3v8h-3z" />
                        {:else if name === "play"}<path d="M1-2 20 10 1 22z" />
                        {:else if name === "forward"}<path d="m5 2 14 8-14 8zM1 6h3v8H1z" />
                        {:else}<path d="m1 2 14 8-14 8zM16 1h2v18h-2z" />{/if}
                    </svg>
                </button>
            {/each}
        </div>
        <ol>
            {#each features as name, i}
                <li class:future={i >= rolled}>
                    {@render icon(name, "mini")}
                    <b></b>
                    {#if i === rolled - 1}
                        <svg class="marker" viewBox="0 0 18 48"><path d="M0 0h18v8l-7 8v32H8V16L0 8z" /></svg>
                    {/if}
                </li>
            {/each}
        </ol>
        <button class="prefs" aria-label="Timeline settings">{@render gear("bigcog")}</button>
    </footer>
</main>

<style>
    :global(body) {
        margin: 0;
    }
    main {
        min-height: 100vh;
        display: flex;
        flex-direction: column;
        font-family: "Liberation Sans", Arial, sans-serif;
        font-size: 16px;
        color: #333;
        background: #f1f1f1;
        overflow: hidden;
    }
    button {
        font: inherit;
        color: inherit;
        background: none;
        border: 0;
        padding: 0;
        display: flex;
        align-items: center;
        justify-content: center;
    }
    svg {
        display: block;
        flex: none;
    }
    h1, h2, ul, ol {
        margin: 0;
        padding: 0;
        font-weight: 400;
        list-style: none;
    }
    .caret {
        border: 5px solid transparent;
        border-top: 7px solid currentColor;
        border-bottom: 0;
    }

    .titlebar {
        height: 34px;
        display: flex;
        align-items: center;
        gap: 9px;
        padding-left: 3px;
        background: linear-gradient(90deg, #f1f3fa, #edf3fa 60%, #f1f3f6);
    }
    .logo {
        width: 22px;
        height: 24px;
    }
    h1 {
        font: 17px "Open Sans", sans-serif;
        color: #111;
        flex: 1;
    }
    .window {
        display: flex;
        padding-right: 1px;
    }
    .window button {
        width: 70px;
        height: 34px;
    }
    .window svg {
        width: 16px;
        height: 16px;
        fill: none;
        stroke: #111;
        stroke-width: 1.3;
    }

    .appbar {
        height: 42px;
        padding-top: 6px;
        display: flex;
        background: #cbcbcb;
    }
    .appbar svg {
        width: 22px;
        height: 22px;
        fill: #666;
    }
    .quick {
        width: 290px;
        box-sizing: border-box;
        padding: 0 0 6px 13px;
        display: flex;
        align-items: center;
        gap: 27px;
        color: #666;
    }
    .wide {
        gap: 9px;
    }
    .faded {
        opacity: .6;
        margin-left: -9px;
    }
    .line {
        fill: none;
        stroke: #666;
        stroke-width: 3;
    }
    .home {
        width: 58px;
        margin-right: 6px;
        padding: 4px 0 0 4px;
        background: #bababa;
        border-radius: 6px 6px 0 0;
    }
    .home svg {
        fill: #808080;
    }
    .doctab {
        flex: 1;
        display: flex;
        background: #f1f1f1;
        border-radius: 6px 6px 0 0;
    }
    .docname {
        flex: 1;
        display: flex;
        align-items: center;
        justify-content: center;
        gap: 7px;
        padding: 2px 0 0 10px;
        font: 17px "Open Sans", sans-serif;
    }
    .docname svg {
        width: 24px;
        height: 24px;
    }
    .closetab {
        width: 22px;
        height: 28px;
        margin-right: 5px;
        background: #fff;
        border: 1px solid #ccc;
        border-radius: 4px;
        padding-top: 14px;
    }
    .closetab svg {
        width: 12px;
        height: 12px;
        stroke: #777;
        stroke-width: 2;
    }
    .newtab {
        width: 41px;
        margin-left: 8px;
        background: #bababa;
        border-radius: 6px 6px 0 0;
    }
    .newtab svg {
        width: 19px;
        height: 19px;
        fill: #808080;
    }
    .account {
        display: flex;
        align-items: center;
        gap: 25px;
        padding: 0 20px 6px 18px;
        font: 17px "Open Sans", sans-serif;
    }
    .account svg {
        width: 24px;
        height: 24px;
    }
    .jobs {
        gap: 6px;
        margin-right: 8px;
    }
    .account .avatar {
        width: 37px;
        height: 37px;
        margin-left: 6px;
        border-radius: 50%;
        background: #ededed;
    }

    .ribbon {
        display: flex;
        height: 123px;
        margin-bottom: 4px;
        border-bottom: 1px solid #d5d5d5;
        box-sizing: border-box;
        background: #f1f1f1;
    }
    .design {
        width: 166px;
        height: 92px;
        margin: 15px 5px 0 17px;
        box-sizing: border-box;
        border: 2px solid #cdcdcd;
        border-radius: 6px;
        font-weight: 700;
        gap: 8px;
    }
    .tools {
        flex: 1;
    }
    nav {
        display: flex;
        gap: 35px;
        padding-left: 20px;
    }
    nav button {
        height: 36px;
        padding: 1px 18px 0;
        border-bottom: 4px solid transparent;
        box-sizing: border-box;
    }
    nav .active {
        color: #0b8bc9;
        border-bottom-color: #1590c9;
    }
    .groups {
        display: flex;
        padding-top: 2px;
    }
    .group {
        padding: 2px 5px 0 7px;
        border-right: 2px solid #d3d3d3;
        height: 78px;
        box-sizing: border-box;
    }
    .group:last-child {
        border: 0;
    }
    .icons {
        display: flex;
        justify-content: center;
        height: 48px;
    }
    .tool {
        width: 65px;
    }
    .big {
        width: 48px;
        height: 48px;
        overflow: visible;
    }
    .picked {
        width: 58px;
        height: 58px;
        margin-top: -4px;
        background: #0696d7;
    }
    .label {
        width: 100%;
        padding: 10px 14px;
        box-sizing: border-box;
        gap: 6px;
        line-height: 20px;
    }

    .stage {
        flex: 1;
        position: relative;
        display: grid;
        grid-template-columns: 1fr auto 1fr;
        background: #fff;
    }
    .scene {
        position: absolute;
        inset: 0;
        width: 100%;
        height: 100%;
    }
    .minor {
        stroke: #f0f0f0;
        stroke-width: 1.4;
    }
    .major {
        stroke: #d7d7d7;
        stroke-width: 1.4;
    }
    .x {
        stroke: #f9a2a6;
        stroke-width: 1.4;
    }
    .y {
        stroke: #93f593;
        stroke-width: 1.4;
    }
    .edge {
        stroke: #141412;
        stroke-width: 1.4;
    }
    .left, .right, .navbar {
        position: relative;
    }
    .left {
        display: flex;
        flex-direction: column;
        justify-content: space-between;
        padding: 7px 0 6px 6px;
    }
    .panel {
        width: 449px;
        height: 37px;
        box-sizing: border-box;
        display: flex;
        align-items: center;
        gap: 14px;
        padding: 1px 16px 0 6px;
        background: #f1f1f1;
        border: 1px solid #cacaca;
        border-bottom-width: 2px;
        color: #666;
    }
    .comments {
        padding-left: 37px;
        border-top: 0;
    }
    h2 {
        font-size: 16px;
        flex: 1;
    }
    .collapse {
        width: 16px;
        height: 10px;
        fill: #333;
    }
    .dot {
        width: 14px;
        height: 14px;
        fill: #333;
    }
    .browser ul {
        padding: 8px 0 0 55px;
    }
    .browser li {
        display: flex;
        align-items: center;
        height: 30px;
        margin-bottom: 6px;
    }
    .browser .root {
        margin-left: -28px;
    }
    .open {
        width: 12px;
        height: 12px;
        margin-right: 15px;
    }
    .closed {
        width: 10px;
        height: 14px;
        margin-right: 16px;
    }
    .item {
        height: 30px;
        display: flex;
        align-items: center;
        padding: 0 19px 0 5px;
        background: #f1f1f1;
    }
    .root .item {
        padding-right: 11px;
    }
    .eye {
        width: 23px;
        height: 16px;
    }
    .cog {
        width: 21px;
        height: 21px;
        margin-right: 18px;
        color: #858585;
    }
    .folder {
        width: 24px;
        height: 20px;
        margin-right: 21px;
    }
    .second {
        margin-left: 14px;
    }
    .selected {
        display: flex;
        align-items: center;
        gap: 24px;
        height: 24px;
        margin: 0 7px 0 9px;
        padding: 0 18px 0 7px;
        background: #969696;
        color: #fff;
        font-weight: 700;
    }
    .selected svg {
        width: 20px;
        height: 20px;
    }
    .root input {
        appearance: none;
        width: 20px;
        height: 20px;
        margin: 0;
        border: 1px solid #555;
        border-radius: 50%;
        background: radial-gradient(circle, #333 4px, #d3dae3 5px, #c2cad6);
    }

    .navbar {
        align-self: end;
        height: 36px;
        box-sizing: border-box;
        margin-bottom: 9px;
        padding: 0 5px 2px;
        display: flex;
        align-items: center;
        gap: 15px;
        background: #f1f1f1;
    }
    .navbar svg {
        width: 24px;
        height: 24px;
    }
    .navbar button {
        gap: 6px;
    }
    .navbar .drop {
        margin-right: -7px;
    }
    .navbar .drop:last-child {
        margin-right: 0;
    }

    .right {
        display: flex;
        flex-direction: column;
        align-items: flex-end;
        padding: 21px 6px 0 0;
    }
    .cube {
        width: 92px;
        height: 104px;
        margin: 0 16px 2px 0;
        overflow: visible;
    }
    .cube text {
        font-size: 10px;
        font-weight: 700;
        fill: #858585;
    }
    .cube .z {
        font-size: 14px;
        fill: #8a86f5;
    }
    .cube .xlabel {
        font-size: 14px;
        fill: #f28b8b;
    }
    .cube .small {
        font-size: 9px;
    }
    .setup {
        width: 33px;
        height: 245px;
        flex-direction: column;
        justify-content: space-between;
        padding: 11px 0 18px;
        box-sizing: border-box;
        background: #f1f1f1;
        font: 17px "Open Sans", sans-serif;
        color: #000;
    }
    .setup span {
        writing-mode: vertical-rl;
        transform: rotate(180deg);
    }

    footer {
        height: 75px;
        box-sizing: border-box;
        border-top: 2px solid #d2d2d2;
        display: flex;
        background: #f1f1f1;
    }
    .playback {
        display: flex;
        height: 70px;
        align-items: center;
        padding-left: 6px;
    }
    .playback button {
        width: 38px;
    }
    .playback svg {
        width: 20px;
        height: 20px;
        fill: #555;
        overflow: visible;
    }
    ol {
        position: relative;
        display: flex;
        margin-left: 17px;
    }
    ol::after {
        content: "";
        position: absolute;
        left: 17px;
        right: 17px;
        top: 58px;
        height: 3px;
        background: #c8c8c8;
    }
    ol li {
        position: relative;
        width: 36px;
        padding-top: 22px;
        display: flex;
        flex-direction: column;
        align-items: center;
        gap: 5px;
    }
    ol b {
        width: 2px;
        height: 8px;
        background: #c8c8c8;
    }
    .mini {
        width: 24px;
        height: 24px;
        overflow: visible;
    }
    .future .mini {
        opacity: .25;
    }
    .marker {
        position: absolute;
        z-index: 1;
        left: 27px;
        top: 13px;
        width: 18px;
        height: 48px;
        fill: #636363;
    }
    .prefs {
        margin: 0 20px 0 auto;
        height: 70px;
        color: #666;
    }
    .bigcog {
        width: 24px;
        height: 24px;
    }
</style>
